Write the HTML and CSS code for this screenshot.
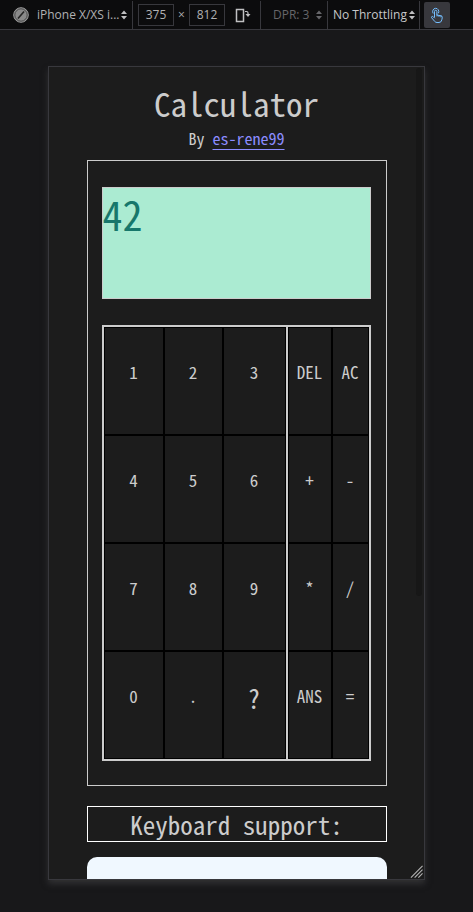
FILE: index.html
```html
<!DOCTYPE html>
<html lang="en">
<head>
<meta charset="utf-8">
<meta name="viewport" content="width=device-width, initial-scale=1">
<title>Calculator</title>
<link rel="stylesheet" href="styles.css">
</head>
<body>
<header class="toolbar">
  <div class="group group-device">
    <svg class="browser-icon" viewBox="0 0 16 16" aria-hidden="true"><circle cx="8" cy="8" r="7.3" fill="#8a8a8a" stroke="#9a9a9a"/><circle cx="8" cy="8" r="6.2" fill="none" stroke="#4a4a4a"/><path d="M5 11.5 11 4.5" stroke="#252525" stroke-width="1.600"/></svg>
    <select class="pick pick-device" aria-label="Device"><option>iPhone X/XS i...</option></select>
    <svg class="arrows" viewBox="0 0 6 10" aria-hidden="true"><path d="M0 4 3 0.5 6 4zM0 6 3 9.5 6 6z"/></svg>
  </div>
  <div class="group group-size">
    <input class="size" type="text" value="375" aria-label="Width">
    <span class="times">×</span>
    <input class="size" type="text" value="812" aria-label="Height">
    <button class="rotate" type="button" aria-label="Rotate viewport"><svg viewBox="0 0 16 16" aria-hidden="true"><rect x="1.500" y="2.500" width="7" height="12" fill="none" stroke="#c0c0c2" stroke-width="1.500"/><path d="M10 4.500h1.500q1.500 0 1.500 1.500v2" fill="none" stroke="#c0c0c2" stroke-width="1.200"/><path d="M10.500 7h5L13 10z" fill="#c0c0c2"/></svg></button>
  </div>
  <div class="group group-dpr">
    <select class="pick pick-dpr" aria-label="Device pixel ratio" disabled><option>DPR: 3</option></select>
    <svg class="arrows arrows-dim" viewBox="0 0 6 10" aria-hidden="true"><path d="M0 4 3 0.5 6 4zM0 6 3 9.5 6 6z"/></svg>
  </div>
  <div class="group group-throttle">
    <select class="pick pick-throttle" aria-label="Throttling"><option>No Throttling</option></select>
    <svg class="arrows" viewBox="0 0 6 10" aria-hidden="true"><path d="M0 4 3 0.5 6 4zM0 6 3 9.5 6 6z"/></svg>
  </div>
  <button class="touch" type="button" aria-label="Touch simulation"><svg viewBox="0 0 16 16" fill="none" stroke="#75bfff" stroke-linecap="round" stroke-linejoin="round" aria-hidden="true"><path d="M5.500 10V4.500a1.200 1.200 0 0 1 2.400 0V8l4.200.8q1.400.4 1.200 1.700l-.5 2.300q-.4 2.700-2.800 2.700H8q-1.400 0-2.200-1L2.600 10.700q-.5-1 .5-1.300.8-.1 1.300.5l1.100 1.100"/><path d="M4 6.200a3.200 3.200 0 1 1 5.600-.3M8 8v1M10 8.500v1M12 9v1"/></svg></button>
</header>
<main class="stage">
  <div class="viewport">
    <div class="page">
      <h1 class="title">Calculator</h1>
      <p class="byline">By <a href="#author">es-rene99</a></p>
      <section class="calculator" aria-label="Calculator">
        <output class="display">42</output>
        <div class="keypad">
          <div class="keys digits">
            <button type="button">1</button><button type="button">2</button><button type="button">3</button>
            <button type="button">4</button><button type="button">5</button><button type="button">6</button>
            <button type="button">7</button><button type="button">8</button><button type="button">9</button>
            <button type="button">0</button><button type="button">.</button><button type="button" class="help">?</button>
          </div>
          <div class="keys operators">
            <button type="button">DEL</button><button type="button">AC</button>
            <button type="button">+</button><button type="button">-</button>
            <button type="button">*</button><button type="button">/</button>
            <button type="button">ANS</button><button type="button">=</button>
          </div>
        </div>
      </section>
      <h2 class="subtitle">Keyboard support:</h2>
      <div class="panel"></div>
    </div>
    <div class="scroll-thumb"></div>
    <svg class="grip" viewBox="0 0 14 14" stroke="#b4b4b4" stroke-width="1.200" aria-hidden="true"><path d="M1 13.500 13.500 1M5 13.500 13.500 5M9 13.500 13.500 9"/></svg>
  </div>
</main>
</body>
</html>
```
FILE: styles.css
```css
* {
  box-sizing: border-box;
}

body {
  margin: 0;
  height: 100vh;
  display: flex;
  flex-direction: column;
  background: #18181a;
  color: #cccccc;
  font-family: "Open Sans", sans-serif;
}

button,
input,
select {
  margin: 0;
  padding: 0;
  border: 0;
  background: none;
  color: inherit;
  font: inherit;
}

.toolbar {
  display: flex;
  align-items: center;
  height: 30px;
  background: #0c0c0d;
  border-bottom: 1px solid #38383d;
  font-size: 12px;
  color: #b1b1b3;
}

.group {
  display: flex;
  align-items: center;
  height: 28px;
  border-right: 1px solid #38383d;
}

.group-device {
  padding: 0 5px 0 13px;
}

.browser-icon {
  width: 16px;
  height: 16px;
  margin-right: 8px;
}

.pick {
  appearance: none;
  opacity: 1;
}

.pick-device {
  width: 84px;
}

.arrows {
  width: 6px;
  height: 10px;
  fill: #c0c0c2;
}

.arrows-dim {
  fill: #66666a;
}

.group-size {
  gap: 5px;
  padding: 0 9px 0 5px;
}

.size {
  width: 36px;
  height: 22px;
  border: 1px solid #38383d;
  text-align: center;
}

.times {
  width: 5px;
  display: flex;
  justify-content: center;
}

.rotate {
  width: 16px;
  height: 16px;
  margin-left: 5px;
}

.rotate svg,
.touch svg {
  display: block;
  width: 16px;
  height: 16px;
}

.group-dpr {
  padding: 0 5px 0 12px;
  color: #66666a;
}

.pick-dpr {
  width: 43px;
}

.group-throttle {
  padding: 0 4px 0 5px;
  color: #c8c8ca;
}

.pick-throttle {
  width: 76px;
}

.touch {
  display: grid;
  place-items: center;
  width: 26px;
  height: 26px;
  margin-left: 4px;
  border-radius: 2px;
  background: #38383d;
}

.stage {
  flex: 1;
  display: flex;
  min-height: 0;
  padding: 36px 48px 32px;
}

.viewport {
  position: relative;
  flex: 1;
  overflow: hidden;
  border: 1px solid #38383d;
  background: #1c1c1c;
  box-shadow: 0 4px 6px #303032;
}

.page {
  width: 80%;
  margin: 0 auto;
  padding-top: 16px;
  font-family: "Noto Sans Mono CJK JP", "Noto Sans CJK JP", monospace;
  font-feature-settings: "hwid";
  font-weight: 300;
}

.title {
  margin: 0;
  font-size: 33px;
  font-weight: 400;
  line-height: 40px;
  text-align: center;
}

.byline {
  margin: 0 0 9px;
  padding-top: 2px;
  font-size: 16px;
  line-height: 26px;
  text-align: center;
}

.byline a {
  color: #8c8cff;
  text-underline-offset: 4px;
}

.calculator {
  padding: 26px 15px 24px 14px;
  border: 1px solid #cccccc;
}

.display {
  display: block;
  height: 112px;
  margin-bottom: 26px;
  border: 1px solid #cccccc;
  background: #abebd2;
  color: #17776b;
  font-size: 40px;
  line-height: 52px;
}

.keypad {
  display: grid;
  grid-template-columns: 184fr 81fr;
  border: 2px solid #cccccc;
}

.keys {
  display: grid;
  grid-auto-rows: 108px;
}

.digits {
  grid-template-columns: 60fr 59fr 63fr;
  border-right: 2px solid #cccccc;
}

.operators {
  grid-template-columns: 44fr 37fr;
}

.keys button {
  padding-bottom: 20px;
  border: 1px solid #000000;
  font-size: 17px;
  font-feature-settings: inherit;
}

.keys .help {
  padding-bottom: 16px;
  font-size: 26px;
}

.subtitle {
  margin: 20px 0 15px;
  border: 1px solid #ffffff;
  font-size: 25px;
  font-weight: 500;
  line-height: 34px;
  text-align: center;
}

.panel {
  height: 200px;
  border-radius: 10px;
  background: #f0f8ff;
}

.scroll-thumb {
  position: absolute;
  top: 1px;
  right: 2px;
  width: 6px;
  height: 65%;
  border-radius: 3px;
  background: #171717;
}

.grip {
  position: absolute;
  right: 1px;
  bottom: 1px;
  width: 13px;
  height: 13px;
}
```
